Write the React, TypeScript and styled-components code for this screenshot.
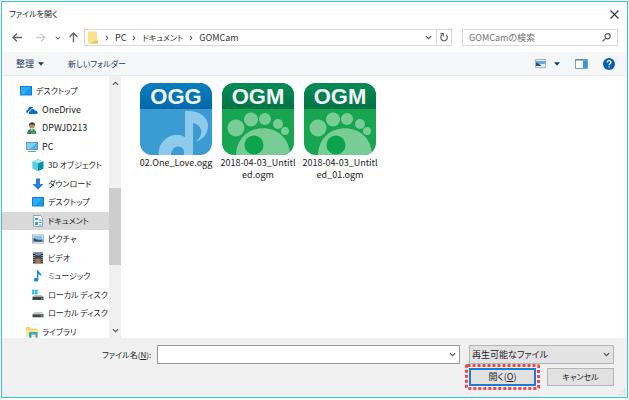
import React from "react";
import styled, { createGlobalStyle, css } from "styled-components";

const GlobalStyle = createGlobalStyle`
  * { box-sizing: border-box; }
  body { margin: 0; background: #fff; }
  body, button, input, select {
    font-family: "Noto Sans CJK JP", "Noto Sans", sans-serif;
    font-size: 9px;
    line-height: 14px;
    color: #222;
    font-feature-settings: "palt";
  }
  button, input, select { margin: 0; padding: 0; border: 0; background: none; border-radius: 0; }
  svg { display: block; flex: none; }
`;

const Page = styled.div`
  min-height: 100vh;
  padding: 1px 1px 2px;
  display: flex;
`;

const Dialog = styled.main`
  flex: 1;
  min-width: 0;
  display: flex;
  flex-direction: column;
  border: 1px solid #45c1c9;
  box-shadow: 0 0 1px #9be4e8;
`;

const TitleBar = styled.header`
  height: 24px;
  padding: 0 7px;
  display: flex;
  align-items: center;
  justify-content: space-between;
`;

const Title = styled.h1`
  margin: 0;
  font-size: 8px;
  font-weight: 400;
`;

const IconButton = styled.button<{ $w: number }>`
  width: ${(p) => p.$w}px;
  height: 15px;
  display: flex;
  align-items: center;
  justify-content: center;
`;

const NavBar = styled.nav`
  height: 26px;
  padding: 0 9px 3px 5px;
  display: flex;
  align-items: center;
`;

const AddressBar = styled.div`
  flex: 1;
  min-width: 0;
  height: 17px;
  margin: 0 10px 0 1px;
  padding-left: 2px;
  display: flex;
  align-items: center;
  border: 1px solid #d9d9d9;
`;

const Crumbs = styled.ol`
  flex: 1;
  margin: 0;
  padding: 0;
  list-style: none;
  display: flex;
  align-items: center;
`;

const Crumb = styled.li`
  display: flex;
  align-items: center;
  svg { margin: 0 5px; }
`;

const CrumbLink = styled.a<{ $kana?: boolean }>`
  font-size: ${(p) => (p.$kana ? 8 : 9)}px;
  color: #333;
  text-decoration: none;
`;

const RefreshCell = styled.span`
  border-left: 1px solid #d9d9d9;
`;

const SearchBox = styled.label`
  width: 156px;
  height: 17px;
  padding: 0 6px;
  display: flex;
  align-items: center;
  border: 1px solid #d9d9d9;
`;

const SearchInput = styled.input`
  flex: 1;
  min-width: 0;
  outline: none;
  &::placeholder { color: #707070; opacity: 1; }
`;

const Toolbar = styled.div`
  height: 24px;
  padding: 0 12px 0 14px;
  display: flex;
  align-items: center;
  gap: 24px;
  background: #f4f6f8;
  border-bottom: 1px solid #e9ebee;
`;

const ToolButton = styled.button<{ $size?: number }>`
  display: flex;
  align-items: center;
  gap: 4px;
  font-size: ${(p) => p.$size ?? 9}px;
  color: #20395c;
`;

const ToolGroup = styled.div`
  margin-left: auto;
  display: flex;
  align-items: center;
  gap: 15px;
`;

const SplitButton = styled.div`
  display: flex;
  align-items: center;
  gap: 8px;
`;

const Body = styled.div`
  flex: 1;
  display: flex;
  min-height: 262px;
`;

const Sidebar = styled.aside`
  width: 119px;
  flex: none;
  display: flex;
  overflow: hidden;
`;

const Tree = styled.ul`
  flex: 1;
  min-width: 0;
  margin: 0 0 -3px;
  padding: 6px 0 0;
  list-style: none;
  display: flex;
  flex-direction: column;
`;

const TreeRow = styled.li<{ $level: number; $kana: boolean; $selected?: boolean }>`
  flex: 1;
  padding-left: ${(p) => 12 + p.$level * 6}px;
  display: flex;
  align-items: center;
  gap: 4px;
  font-size: ${(p) => (p.$kana ? 8 : 9)}px;
  white-space: nowrap;
  ${(p) => p.$selected && css`background: #d9d9d9;`}
`;

const ScrollBar = styled.div`
  width: 12px;
  display: flex;
  flex-direction: column;
  align-items: center;
  background: #f0f0f0;
`;

const ScrollTrack = styled.div`
  flex: 1;
  width: 100%;
  display: grid;
  grid-template-rows: 42% 33% 1fr;
`;

const ScrollThumb = styled.div`
  grid-row: 2;
  background: #cdcdcd;
`;

const Files = styled.ul`
  flex: 1;
  margin: 0;
  padding: 7px 17px;
  list-style: none;
  display: flex;
  flex-wrap: wrap;
  align-content: flex-start;
  gap: 6px;
`;

const FileItem = styled.li`
  width: 76px;
  display: flex;
  flex-direction: column;
  align-items: center;
  gap: 2px;
`;

const FileName = styled.span`
  text-align: center;
  line-height: 12px;
  white-space: pre;
`;

const Footer = styled.form`
  height: 59px;
  padding: 7px 13px 0 100px;
  display: grid;
  grid-template-columns: 55px minmax(0, 1fr) 145px;
  grid-template-rows: 19px 18px;
  row-gap: 4px;
  position: relative;
  background: #f0f0f0;
`;

const FieldLabel = styled.label`
  align-self: center;
  font-size: 8px;
  white-space: nowrap;
`;

const NameBox = styled.div`
  display: flex;
  align-items: center;
  padding-right: 3px;
  margin-right: 9px;
  background: #fff;
  border: 1px solid #999;
`;

const NameInput = styled.input`
  flex: 1;
  min-width: 0;
  padding: 0 4px;
  outline: none;
`;

const SelectBox = styled.div`
  display: flex;
  align-items: center;
  padding-right: 3px;
  border: 1px solid #b4b4b4;
  background: #e3e3e3;
`;

const TypeSelect = styled.select`
  flex: 1;
  min-width: 0;
  appearance: none;
  padding-left: 2px;
  outline: none;
`;

const Actions = styled.div`
  grid-column: 3;
  display: flex;
  justify-content: space-between;
`;

const ActionButton = styled.button<{ $primary?: boolean }>`
  width: 67px;
  font-size: 8px;
  background: #e1e1e1;
  border: 1px solid #b4b4b4;
  ${(p) => p.$primary && css`font-size: 9px; border: 2px solid #1b7cd6;`}
`;

const Highlight = styled.span`
  position: relative;
  display: flex;
`;

const HighlightFrame = styled.svg`
  position: absolute;
  left: -4px;
  top: -4px;
  width: 75px;
  height: 26px;
  pointer-events: none;
`;

const Grip = styled.svg`
  position: absolute;
  right: 1px;
  bottom: 1px;
`;

const Chevron = ({ dir = "down", color = "#555", size = 7 }: { dir?: "down" | "up" | "right"; color?: string; size?: number }) => (
  <svg width={size} height={size} viewBox="0 0 8 8" fill="none" stroke={color} strokeWidth="1.4">
    <path d={dir === "down" ? "M1 2.4l3 3 3-3" : dir === "up" ? "M1 5.6l3-3 3 3" : "M2.5 1.2l2.6 2.8-2.6 2.8"} />
  </svg>
);

const Triangle = () => (
  <svg width="6" height="4" viewBox="0 0 7 4"><path d="M0 0h7L3.5 4z" fill="#20395c" /></svg>
);

const Arrow = ({ rotate = 0, color = "#666" }: { rotate?: number; color?: string }) => (
  <svg width="11" height="11" viewBox="0 0 11 11" fill="none" stroke={color} strokeWidth="1.4">
    <g transform={`rotate(${rotate} 5.5 5.5)`}><path d="M10.2 5.5H1.2M5 1.6L1.1 5.5 5 9.4" /></g>
  </svg>
);

const Monitor = () => (
  <>
    <rect y="1" width="12" height="9.5" fill="#147fce" />
    <path d="M1 2h10L4 9.5H1z" fill="#2eabf6" />
    <path d="M11 2v7.5H4z" fill="#149af0" />
  </>
);

const glyphs: Record<string, React.ReactNode> = {
  desktop: <Monitor />,
  cloud: (
    <>
      <path d="M1.7 9.3C-.7 8.3.2 5.8 2 5.8 2.2 2.5 6 1.7 7.3 4.2 5.3 4 4.1 5 3.7 6.6 2.2 6.8 1.5 8 1.7 9.3z" fill="#0b60b5" />
      <path d="M4 10C2 10 2 7.4 4.2 7.3 4.5 4.5 8 4 9.1 6.6c2-.3 3.7 2.5 1.5 3.4z" fill="#0870ca" />
    </>
  ),
  user: (
    <>
      <circle cx="6" cy="3.4" r="3" fill="#bc8b62" />
      <path d="M3 3.5C2.6-.8 9.4-.8 9 3 7 3.4 5 1.8 3 3.5z" fill="#54483c" />
      <path d="M1.5 12c0-7 9-7 9 0z" fill="#4a9569" />
      <path d="M4.7 6.3l1.2 2.5 1.3-2.5z" fill="#e5e6cf" />
      <path d="M1.5 12c0-3 1-4.5 2-4.5L5 12z" fill="#36745d" />
    </>
  ),
  pc: (
    <>
      <rect x=".4" y="1.4" width="11.2" height="7.2" fill="#45b7f5" stroke="#548eb7" strokeWidth=".8" />
      <path d="M1 2h9L4 8H1z" fill="#80d2fb" />
      <path d="M2 10.5h8" stroke="#7e97a7" />
    </>
  ),
  cube: (
    <>
      <path d="M6 .2l5.3 2.2v7L6 12 .7 9.4v-7z" fill="#17a8bc" />
      <path d="M.7 2.4L6 .2l5.3 2.2L6 4.6z" fill="#a3e9ed" />
      <path d="M.7 2.4L6 4.6V12L.7 9.4z" fill="#55cddd" />
      <path d="M6 4.6l5.3-2.2v7L6 12z" fill="#078fa6" />
    </>
  ),
  download: <path d="M4 .5h4V6h3.500L6 11.800.5 6H4z" fill="#2d80d6" />,
  document: (
    <>
      <path d="M1.5.5h7l2 2v9h-9z" fill="#eef6fa" stroke="#8095a2" strokeWidth=".8" />
      <path d="M3 3h3v2H3zM3 7h3v3H3zM7 4.5h2.5v1H7zM7 7h2.5v1H7zM7 9.4h2.5v1H7z" fill="#3a9dd5" />
    </>
  ),
  picture: (
    <>
      <rect x=".4" y="1.9" width="11.2" height="8.2" fill="#eff5f8" stroke="#98a8b3" strokeWidth=".8" />
      <path d="M1.5 3h9v5.8h-9z" fill="#8dc3ea" />
      <path d="M1.5 5c2 0 2.5 1.8 5 1.8h4v2h-9z" fill="#35566c" />
    </>
  ),
  video: (
    <>
      <path d="M1 .5h10v11H1z" fill="#363b42" />
      <path d="M3.3 1h5.4v4.6H3.3z" fill="#688bbb" />
      <path d="M3.3 6.5h5.4V11H3.3z" fill="#a47b49" />
      <path d="M3.3 4c2-2 3 1 5.4-1v2.6H3.3z" fill="#313b50" />
      <path d="M2 1v10M10 1v10" stroke="#d6dadb" strokeDasharray="1 1" />
    </>
  ),
  music: (
    <>
      <path d="M5 .3h1.300c.3 2.200 3.800 2.900 3 6.500-.6-2-1.700-2.300-3-2.600v5.500H5z" fill="#1489e5" />
      <ellipse cx="4.100" cy="9.700" rx="2.300" ry="1.900" fill="#1489e5" />
    </>
  ),
  system: (
    <>
      <path d="M0 .8h2.500v2H0zM3 .8h2.700v2H3zM0 3.300h2.500v2H0zM3 3.300h2.700v2H3z" fill="#1cb5e0" />
      <path d="M2.500 6h7L11.500 8h-11z" fill="#bfc3c4" />
      <path d="M.5 7.800h11V11H.5z" fill="#3f4548" />
      <path d="M9 9.800h1.500" stroke="#84e0a0" />
    </>
  ),
  disk: (
    <>
      <path d="M2 5h8l1.500 2.500H.5z" fill="#c8cbcc" />
      <path d="M.5 7.300h11v3H.5z" fill="#44494c" />
      <path d="M9 9h1.500" stroke="#84e0a0" />
    </>
  ),
  library: (
    <>
      <path d="M0 1h4l1 1.500h6.500V11H0z" fill="#f4d36b" />
      <path d="M0 4h11.500v7H0z" fill="#fbe69b" />
      <path d="M3 11.800V6h8.500v5.800H9.500V8.500H5.500v3.300z" fill="#38abc6" />
    </>
  ),
};

const Glyph = ({ name }: { name: string }) => (
  <svg width="12" height="12" viewBox="0 0 12 12">{glyphs[name]}</svg>
);

const hasKana = (s: string) => /[\u30a0-\u30ff]/.test(s);

const tree: { icon: string; label: string; level: number; selected?: boolean }[] = [
  { icon: "desktop", label: "デスクトップ", level: 1 },
  { icon: "cloud", label: "OneDrive", level: 2 },
  { icon: "user", label: "DPWJD213", level: 2 },
  { icon: "pc", label: "PC", level: 2 },
  { icon: "cube", label: "3D オブジェクト", level: 3 },
  { icon: "download", label: "ダウンロード", level: 3 },
  { icon: "desktop", label: "デスクトップ", level: 3 },
  { icon: "document", label: "ドキュメント", level: 3, selected: true },
  { icon: "picture", label: "ピクチャ", level: 3 },
  { icon: "video", label: "ビデオ", level: 3 },
  { icon: "music", label: "ミュージック", level: 3 },
  { icon: "system", label: "ローカル ディスク (", level: 3 },
  { icon: "disk", label: "ローカル ディスク (", level: 3 },
  { icon: "library", label: "ライブラリ", level: 2 },
];

const MediaIcon = ({ kind }: { kind: "OGG" | "OGM" }) => {
  const ogg = kind === "OGG";
  const id = "clip-" + React.useId().replace(/[^a-zA-Z0-9]/g, "");
  return (
    <svg width="72" height="72" viewBox="0 0 72 72">
      <defs>
        <clipPath id={id}><rect width="72" height="72" rx="12" /></clipPath>
        <linearGradient id={id + "g"} x2="0" y2="1">
          <stop stopColor={ogg ? "#087fc0" : "#078c56"} />
          <stop offset="1" stopColor={ogg ? "#0568aa" : "#047344"} />
        </linearGradient>
      </defs>
      <g clipPath={`url(#${id})`}>
        <rect width="72" height="72" fill={ogg ? "#3b9bd3" : "#18a551"} />
        {ogg ? (
          <path fill="#8ecaea" fillRule="evenodd" d="M19 73a18 18 0 0 1 26-19V28c13-1 23 5 23 15 0 8-5 13-12 16 4-4 6-8 5-12-1-4-4-6-8-7v33zM31 73h13v-5c-2-7-13-6-13 5z" />
        ) : (
          <g fill="#78cd96">
            <circle cx="14" cy="45" r="8.500" />
            <circle cx="29" cy="36.500" r="7" />
            <circle cx="43" cy="36" r="6" />
            <circle cx="56" cy="41" r="5" />
            <circle cx="63" cy="48" r="4" />
            <path d="M14 73C14 36 68 36 68 73z" />
            <circle cx="32" cy="62" r="9.500" fill="#0ba34c" />
          </g>
        )}
        <rect width="72" height="26" fill={`url(#${id}g)`} />
      </g>
      <text x="36" y="21" textAnchor="middle" fontFamily="Liberation Sans, sans-serif" fontWeight="700" fontSize="22" fill="#f2fafc">{kind}</text>
    </svg>
  );
};

const files: { kind: "OGG" | "OGM"; name: string }[] = [
  { kind: "OGG", name: "02.One_Love.ogg" },
  { kind: "OGM", name: "2018-04-03_Untitl\ned.ogm" },
  { kind: "OGM", name: "2018-04-03_Untitl\ned_01.ogm" },
];

export default function App() {
  return (
    <Page>
      <GlobalStyle />
      <Dialog>
        <TitleBar>
          <Title>ファイルを開く</Title>
          <IconButton $w={11} aria-label="閉じる">
            <svg width="9" height="9" viewBox="0 0 9 9" stroke="#333" strokeWidth="1.1"><path d="M.5.5l8 8M8.500.5l-8 8" /></svg>
          </IconButton>
        </TitleBar>
        <NavBar>
          <IconButton $w={20} aria-label="戻る"><Arrow /></IconButton>
          <IconButton $w={26} aria-label="進む"><Arrow rotate={180} color="#d0d0d0" /></IconButton>
          <IconButton $w={10} aria-label="履歴"><Chevron size={6} color="#777" /></IconButton>
          <IconButton $w={20} aria-label="上へ"><Arrow rotate={90} /></IconButton>
          <AddressBar>
            <svg width="12" height="13" viewBox="0 0 12 13"><path d="M1 .5h9v9h1v3H1z" fill="#fbe18d" /><path d="M9 9.500h2v3H3z" fill="#eec45b" /></svg>
            <Crumbs>
              {["PC", "ドキュメント", "GOMCam"].map((c) => (
                <Crumb key={c}><Chevron dir="right" size={6} /><CrumbLink href="#" $kana={hasKana(c)}>{c}</CrumbLink></Crumb>
              ))}
            </Crumbs>
            <IconButton $w={15} aria-label="以前の場所"><Chevron /></IconButton>
            <RefreshCell>
              <IconButton $w={14} aria-label="更新">
                <svg width="8" height="9" viewBox="0 0 8 9" fill="none" stroke="#555" strokeWidth="1.100"><path d="M2 1.800A3.300 3.300 0 1 0 6.300 2M.5.6h2.800v2.800" /></svg>
              </IconButton>
            </RefreshCell>
          </AddressBar>
          <SearchBox>
            <SearchInput type="search" placeholder="GOMCamの検索" aria-label="GOMCamの検索" />
            <svg width="9" height="9" viewBox="0 0 9 9" fill="none" stroke="#555" strokeWidth="1.200"><circle cx="5.600" cy="3.300" r="2.600" /><path d="M3.700 5.200L.5 8.400" /></svg>
          </SearchBox>
        </NavBar>
        <Toolbar>
          <ToolButton>整理 <Triangle /></ToolButton>
          <ToolButton $size={8}>新しいフォルダー</ToolButton>
          <ToolGroup>
            <SplitButton>
              <ToolButton aria-label="表示方法">
                <svg width="11" height="9" viewBox="0 0 11 9"><path d="M.5.5h10v8H.5z" fill="#eef5fa" stroke="#9fb3c4" /><path d="M1 2h9v3H1z" fill="#66a9dc" /><path d="M1 4c2-1 3 2 5 2v1H1z" fill="#285378" /></svg>
              </ToolButton>
              <ToolButton aria-label="その他のオプション"><Triangle /></ToolButton>
            </SplitButton>
            <ToolButton aria-label="プレビュー">
              <svg width="13" height="10" viewBox="0 0 13 10"><path d="M.5.5h12v9H.5z" fill="#fff" stroke="#789eb9" /><path d="M.5 1h12" stroke="#557a98" /><path d="M8 1.500h4V9H8z" fill="#2f98e7" /></svg>
            </ToolButton>
            <ToolButton aria-label="ヘルプ">
              <svg width="12" height="12" viewBox="0 0 12 12"><circle cx="6" cy="6" r="6" fill="#075eb5" /><path d="M4.200 4.600C4.200 2 8 2.200 7.900 4.400 7.800 5.700 6.100 5.800 6.100 7.300M6.100 8.300v1.300" fill="none" stroke="#fff" strokeWidth="1.300" /></svg>
            </ToolButton>
          </ToolGroup>
        </Toolbar>
        <Body>
          <Sidebar>
            <Tree>
              {tree.map((t, i) => (
                <TreeRow key={i} $level={t.level} $kana={hasKana(t.label)} $selected={t.selected}><Glyph name={t.icon} />{t.label}</TreeRow>
              ))}
            </Tree>
            <ScrollBar>
              <IconButton $w={12} aria-label="上にスクロール"><Chevron dir="up" /></IconButton>
              <ScrollTrack><ScrollThumb /></ScrollTrack>
              <IconButton $w={12} aria-label="下にスクロール"><Chevron /></IconButton>
            </ScrollBar>
          </Sidebar>
          <Files>
            {files.map((f) => (
              <FileItem key={f.name}><MediaIcon kind={f.kind} /><FileName>{f.name}</FileName></FileItem>
            ))}
          </Files>
        </Body>
        <Footer onSubmit={(e) => e.preventDefault()}>
          <FieldLabel htmlFor="file-name">ファイル名(<u>N</u>):</FieldLabel>
          <NameBox><NameInput id="file-name" type="text" /><Chevron /></NameBox>
          <SelectBox>
            <TypeSelect aria-label="ファイルの種類"><option>再生可能なファイル</option></TypeSelect>
            <Chevron />
          </SelectBox>
          <Actions>
            <Highlight>
              <ActionButton $primary type="submit">開く(<u>O</u>)</ActionButton>
              <HighlightFrame viewBox="0 0 75 26"><rect x="1.500" y="1.500" width="72" height="23" rx="1" fill="none" stroke="#e5484f" strokeWidth="3" strokeDasharray="3 2" /></HighlightFrame>
            </Highlight>
            <ActionButton type="button">キャンセル</ActionButton>
          </Actions>
          <Grip width="7" height="7" viewBox="0 0 7 7" fill="#bbb"><path d="M5 0h1v1H5zM2.500 2.500h1v1h-1zM5 2.500h1v1H5zM0 5h1v1H0zM2.500 5h1v1h-1zM5 5h1v1H5z" /></Grip>
        </Footer>
      </Dialog>
    </Page>
  );
}
